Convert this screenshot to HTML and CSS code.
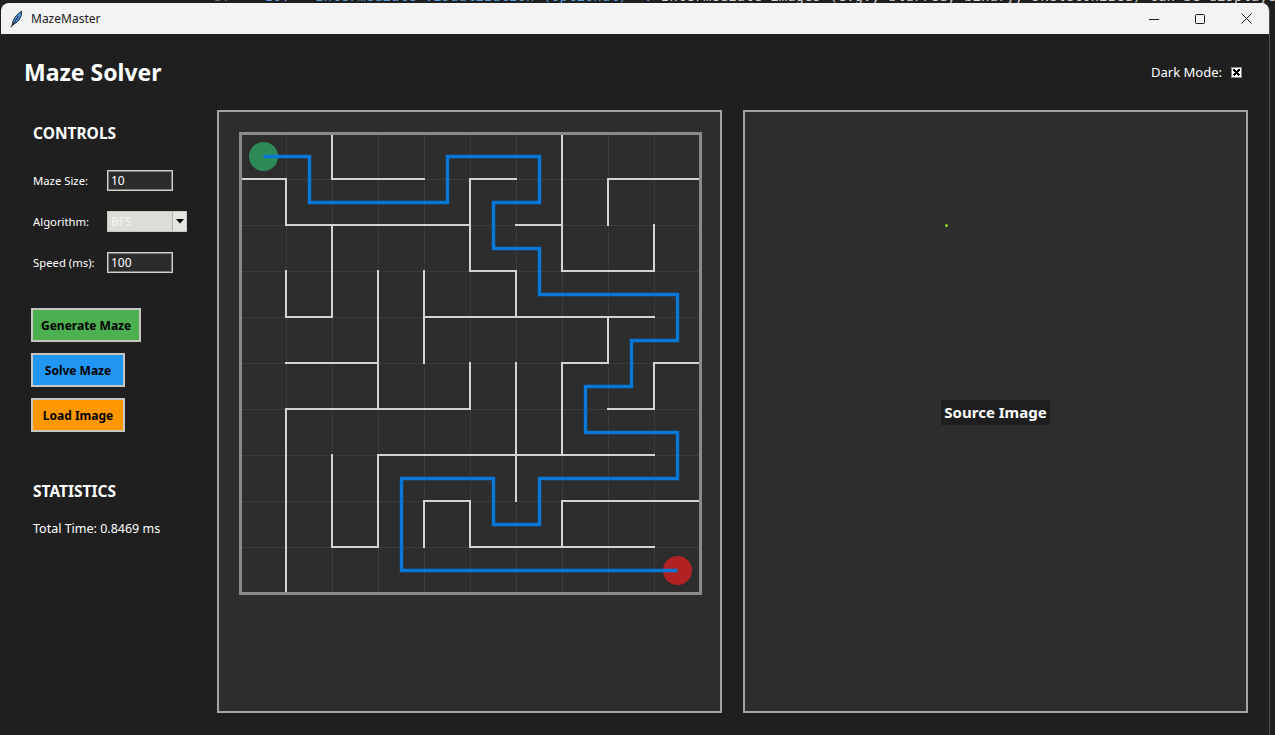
FILE: index.html
```html
<!DOCTYPE html>
<html lang="en">
<head>
<meta charset="utf-8">
<title>MazeMaster</title>
<link rel="stylesheet" href="styles.css">
</head>
<body>
<div class="desktop">
  <div class="editor-line"><span class="ln">57</span>    <span class="num">10.</span> <span class="md">**Intermediate Visualization (Optional)**:</span> Intermediate images (e.g., blurred, binary, skeletonized) can be displayed</div>
  <div class="window">
    <div class="titlebar">
      <svg class="app-icon" width="16" height="18" viewBox="0 0 16 18">
        <path d="M3 16 C3.5 10 7 4.5 12.5 1.2 C13 6 10.5 11.5 5 14 Z" fill="#4b8fe0" stroke="#1b1b1b" stroke-width="0.9"/>
        <path d="M2 17.5 L9.5 6" stroke="#1b1b1b" stroke-width="0.9"/>
      </svg>
      <span class="app-title">MazeMaster</span>
      <div class="win-controls">
        <div class="win-btn"><svg width="10" height="10" viewBox="0 0 10 10"><path d="M0 5.5 H10" stroke="#1a1a1a" stroke-width="1"/></svg></div>
        <div class="win-btn"><svg width="10" height="10" viewBox="0 0 10 10"><rect x="0.5" y="0.5" width="9" height="9" rx="1" fill="none" stroke="#1a1a1a" stroke-width="1"/></svg></div>
        <div class="win-btn"><svg width="11" height="11" viewBox="0 0 11 11"><path d="M0.5 0.5 L10.5 10.5 M10.5 0.5 L0.5 10.5" stroke="#1a1a1a" stroke-width="1"/></svg></div>
      </div>
    </div>
    <div class="client">
      <header class="app-header">
        <h1 class="app-heading">Maze Solver</h1>
        <div class="darkmode">
          <span>Dark Mode:</span>
          <svg class="checkbox" width="11" height="11" viewBox="0 0 11 11" shape-rendering="crispEdges">
            <rect x="0.5" y="0.5" width="10" height="10" fill="#ffffff" stroke="#8a8a8a"/>
            <path d="M2.5 2.5 L8.5 8.5 M8.5 2.5 L2.5 8.5" stroke="#000" stroke-width="2.2"/>
          </svg>
        </div>
      </header>
      <div class="main">
        <aside class="sidebar">
          <div class="section-title controls-title">CONTROLS</div>
          <div class="field-row">
            <span class="field-label">Maze Size:</span>
            <div class="entry">10</div>
          </div>
          <div class="field-row">
            <span class="field-label">Algorithm:</span>
            <div class="combo"><span class="combo-text">BFS</span><span class="combo-arrow"><svg width="8" height="5" viewBox="0 0 8 5"><path d="M0 0 H8 L4 4.5 Z" fill="#000"/></svg></span></div>
          </div>
          <div class="field-row">
            <span class="field-label">Speed (ms):</span>
            <div class="entry">100</div>
          </div>
          <div class="buttons">
            <div class="btn btn-green">Generate Maze</div>
            <div class="btn btn-blue">Solve Maze</div>
            <div class="btn btn-orange">Load Image</div>
          </div>
          <div class="section-title stats-title">STATISTICS</div>
          <div class="stat-text">Total Time: 0.8469 ms</div>
        </aside>
        <section class="panel maze-panel">
          <svg class="maze" width="501" height="599" viewBox="0 0 501 599">
            <g transform="translate(21 21)">
              <g class="grid" transform="translate(0.5 0.5)" stroke="#3b3b3b" stroke-width="1" shape-rendering="crispEdges">
                <path d="M46 0 V460 M92 0 V460 M138 0 V460 M184 0 V460 M230 0 V460 M276 0 V460 M322 0 V460 M368 0 V460 M414 0 V460 M0 46 H460 M0 92 H460 M0 138 H460 M0 184 H460 M0 230 H460 M0 276 H460 M0 322 H460 M0 368 H460 M0 414 H460"/>
              </g>
              <path class="walls" fill="none" stroke="#d3d3d3" stroke-width="2" stroke-linecap="square" shape-rendering="crispEdges"
                d="M0 46 H46 M92 46 H184 M230 46 H276 M368 46 H460
                   M46 92 H230 M276 92 H322
                   M230 138 H276 M322 138 H414
                   M46 184 H92 M184 184 H414
                   M46 230 H138 M322 230 H368 M414 230 H460
                   M46 276 H230 M368 276 H414
                   M138 322 H414
                   M184 368 H230 M322 368 H460
                   M92 414 H138 M230 414 H414
                   M92 0 V46 M322 0 V138 M46 46 V92 M230 46 V138 M368 46 V92
                   M92 92 V184 M414 92 V138 M46 138 V184 M138 138 V276 M184 138 V230
                   M276 138 V184 M368 184 V230 M230 230 V276 M276 230 V368 M322 230 V322
                   M414 230 V276 M46 276 V460 M92 322 V414 M138 322 V414 M184 368 V414
                   M230 368 V414 M322 368 V414"/>
              <rect x="0.5" y="0.5" width="460" height="460" fill="none" stroke="#8a8a8a" stroke-width="3"/>
              <circle cx="23.5" cy="23.5" r="14.5" fill="#2e8b57"/>
              <circle cx="437.5" cy="437.5" r="14.5" fill="#b22222"/>
              <polyline class="path" fill="none" stroke="#0878d8" stroke-width="3.4" stroke-linejoin="miter"
                points="23.5,23.5 69.5,23.5 69.5,69.5 207.5,69.5 207.5,23.5 299.5,23.5 299.5,69.5 253.5,69.5 253.5,115.5 299.5,115.5 299.5,161.5 437.5,161.5 437.5,207.5 391.5,207.5 391.5,253.5 345.5,253.5 345.5,299.5 437.5,299.5 437.5,345.5 299.5,345.5 299.5,391.5 253.5,391.5 253.5,345.5 161.5,345.5 161.5,437.5 437.5,437.5"/>
            </g>
          </svg>
        </section>
        <section class="panel image-panel">
          <span class="pixel-dot"></span>
          <span class="source-label">Source Image</span>
        </section>
      </div>
    </div>
  </div>
</div>
</body>
</html>
```

FILE: styles.css
```css
* { box-sizing: border-box; }

html, body {
  margin: 0;
  padding: 0;
}

body {
  width: 1275px;
  height: 735px;
  overflow: hidden;
  background: #1f1f1f;
  font-family: "Noto Sans", "Open Sans", sans-serif;
}

.desktop {
  position: relative;
  width: 1275px;
  height: 735px;
  overflow: hidden;
}

.editor-line {
  font-family: "DejaVu Sans Mono", "Liberation Mono", monospace;
  font-size: 14px;
  line-height: 19px;
  white-space: pre;
  color: #d4d4d4;
  margin-top: -13px;
  padding-left: 214px;
}
.editor-line .ln { color: #6e7681; }
.editor-line .num { color: #6796e6; }
.editor-line .md { color: #569cd6; }

.window {
  position: absolute;
  left: 1px;
  top: 3px;
  width: 1269px;
  height: 732px;
  display: flex;
  flex-direction: column;
  background: #1f1f1f;
  border-right: 1px solid #4d4d4d;
  border-radius: 8px 8px 0 0;
  overflow: hidden;
}

/* ---------- title bar ---------- */
.titlebar {
  flex: none;
  height: 31px;
  background: #f3f3f3;
  display: flex;
  align-items: center;
}

.app-icon {
  margin-left: 8px;
  flex: none;
}

.app-title {
  margin-left: 6px;
  font-size: 12px;
  color: #1a1a1a;
}

.win-controls {
  margin-left: auto;
  display: flex;
  height: 100%;
}

.win-btn {
  width: 46px;
  height: 100%;
  display: flex;
  align-items: center;
  justify-content: center;
}

/* ---------- client ---------- */
.client {
  flex: 1;
  display: flex;
  flex-direction: column;
}

.app-header {
  height: 76px;
  flex: none;
  display: flex;
  align-items: center;
  justify-content: space-between;
  padding: 0 27px 0 23px;
}

.app-heading {
  margin: 0;
  font-size: 23px;
  line-height: 24px;
  font-weight: 700;
  color: #ffffff;
}

.darkmode {
  display: flex;
  align-items: center;
  gap: 9px;
  font-size: 13px;
  color: #ffffff;
}

.checkbox {
  display: block;
}

.main {
  display: flex;
  height: 603px;
  gap: 21px;
}

/* ---------- sidebar ---------- */
.sidebar {
  width: 216px;
  flex: none;
  margin-right: -21px;
  padding-left: 32px;
  color: #ffffff;
}

.section-title {
  font-size: 15.5px;
  line-height: 16px;
  font-weight: 700;
}

.controls-title {
  margin-top: 15px;
}

.field-row {
  display: flex;
  align-items: center;
  height: 21px;
  margin-top: 20px;
}

.controls-title + .field-row {
  margin-top: 29px;
}

.field-label {
  width: 74px;
  font-size: 11.3px;
  line-height: 14px;
}

.entry {
  width: 66px;
  height: 21px;
  background: #2b2b2b;
  border: 1px solid #d2d2ca;
  box-shadow: inset 0 0 0 1px #7c7c78;
  font-size: 12px;
  line-height: 19px;
  padding-left: 3px;
  color: #ffffff;
}

.combo {
  width: 80px;
  height: 21px;
  display: flex;
  background: #dddcd7;
  border: 1px solid #c9c9c2;
}

.combo-text {
  flex: 1;
  font-size: 12px;
  line-height: 19px;
  padding-left: 3px;
  color: #f4f4f4;
}

.combo-arrow {
  width: 14px;
  display: flex;
  align-items: center;
  justify-content: center;
  background: #e6e5e1;
  border-left: 1px solid #b4b4ad;
}

.buttons {
  margin-top: 35px;
  margin-left: -2px;
  display: flex;
  flex-direction: column;
  align-items: flex-start;
  gap: 11px;
}

.btn {
  height: 34px;
  min-width: 94px;
  padding: 0 8px;
  display: flex;
  align-items: center;
  justify-content: center;
  border: 2px solid #c6c6c0;
  font-size: 12px;
  font-weight: 700;
  color: #000000;
}

.btn-green { background: #4caf50; }
.btn-blue { background: #2196f3; }
.btn-orange { background: #ff9800; }

.stats-title {
  margin-top: 51px;
}

.stat-text {
  margin-top: 23px;
  font-size: 12.5px;
  line-height: 13px;
}

/* ---------- panels ---------- */
.panel {
  width: 505px;
  height: 603px;
  flex: none;
  background: #2d2d2d;
  border: 2px solid #a5a59f;
}

.maze {
  display: block;
}

.image-panel {
  position: relative;
  display: flex;
  align-items: center;
  justify-content: center;
}

.pixel-dot {
  position: absolute;
  left: 200px;
  top: 112px;
  width: 3px;
  height: 3px;
  border-radius: 50%;
  background: #8fd01c;
}

.source-label {
  background: #1e1e1e;
  color: #ffffff;
  font-size: 15px;
  line-height: 25px;
  font-weight: 700;
  padding: 0 3px;
  margin-top: 2px;
}
```
